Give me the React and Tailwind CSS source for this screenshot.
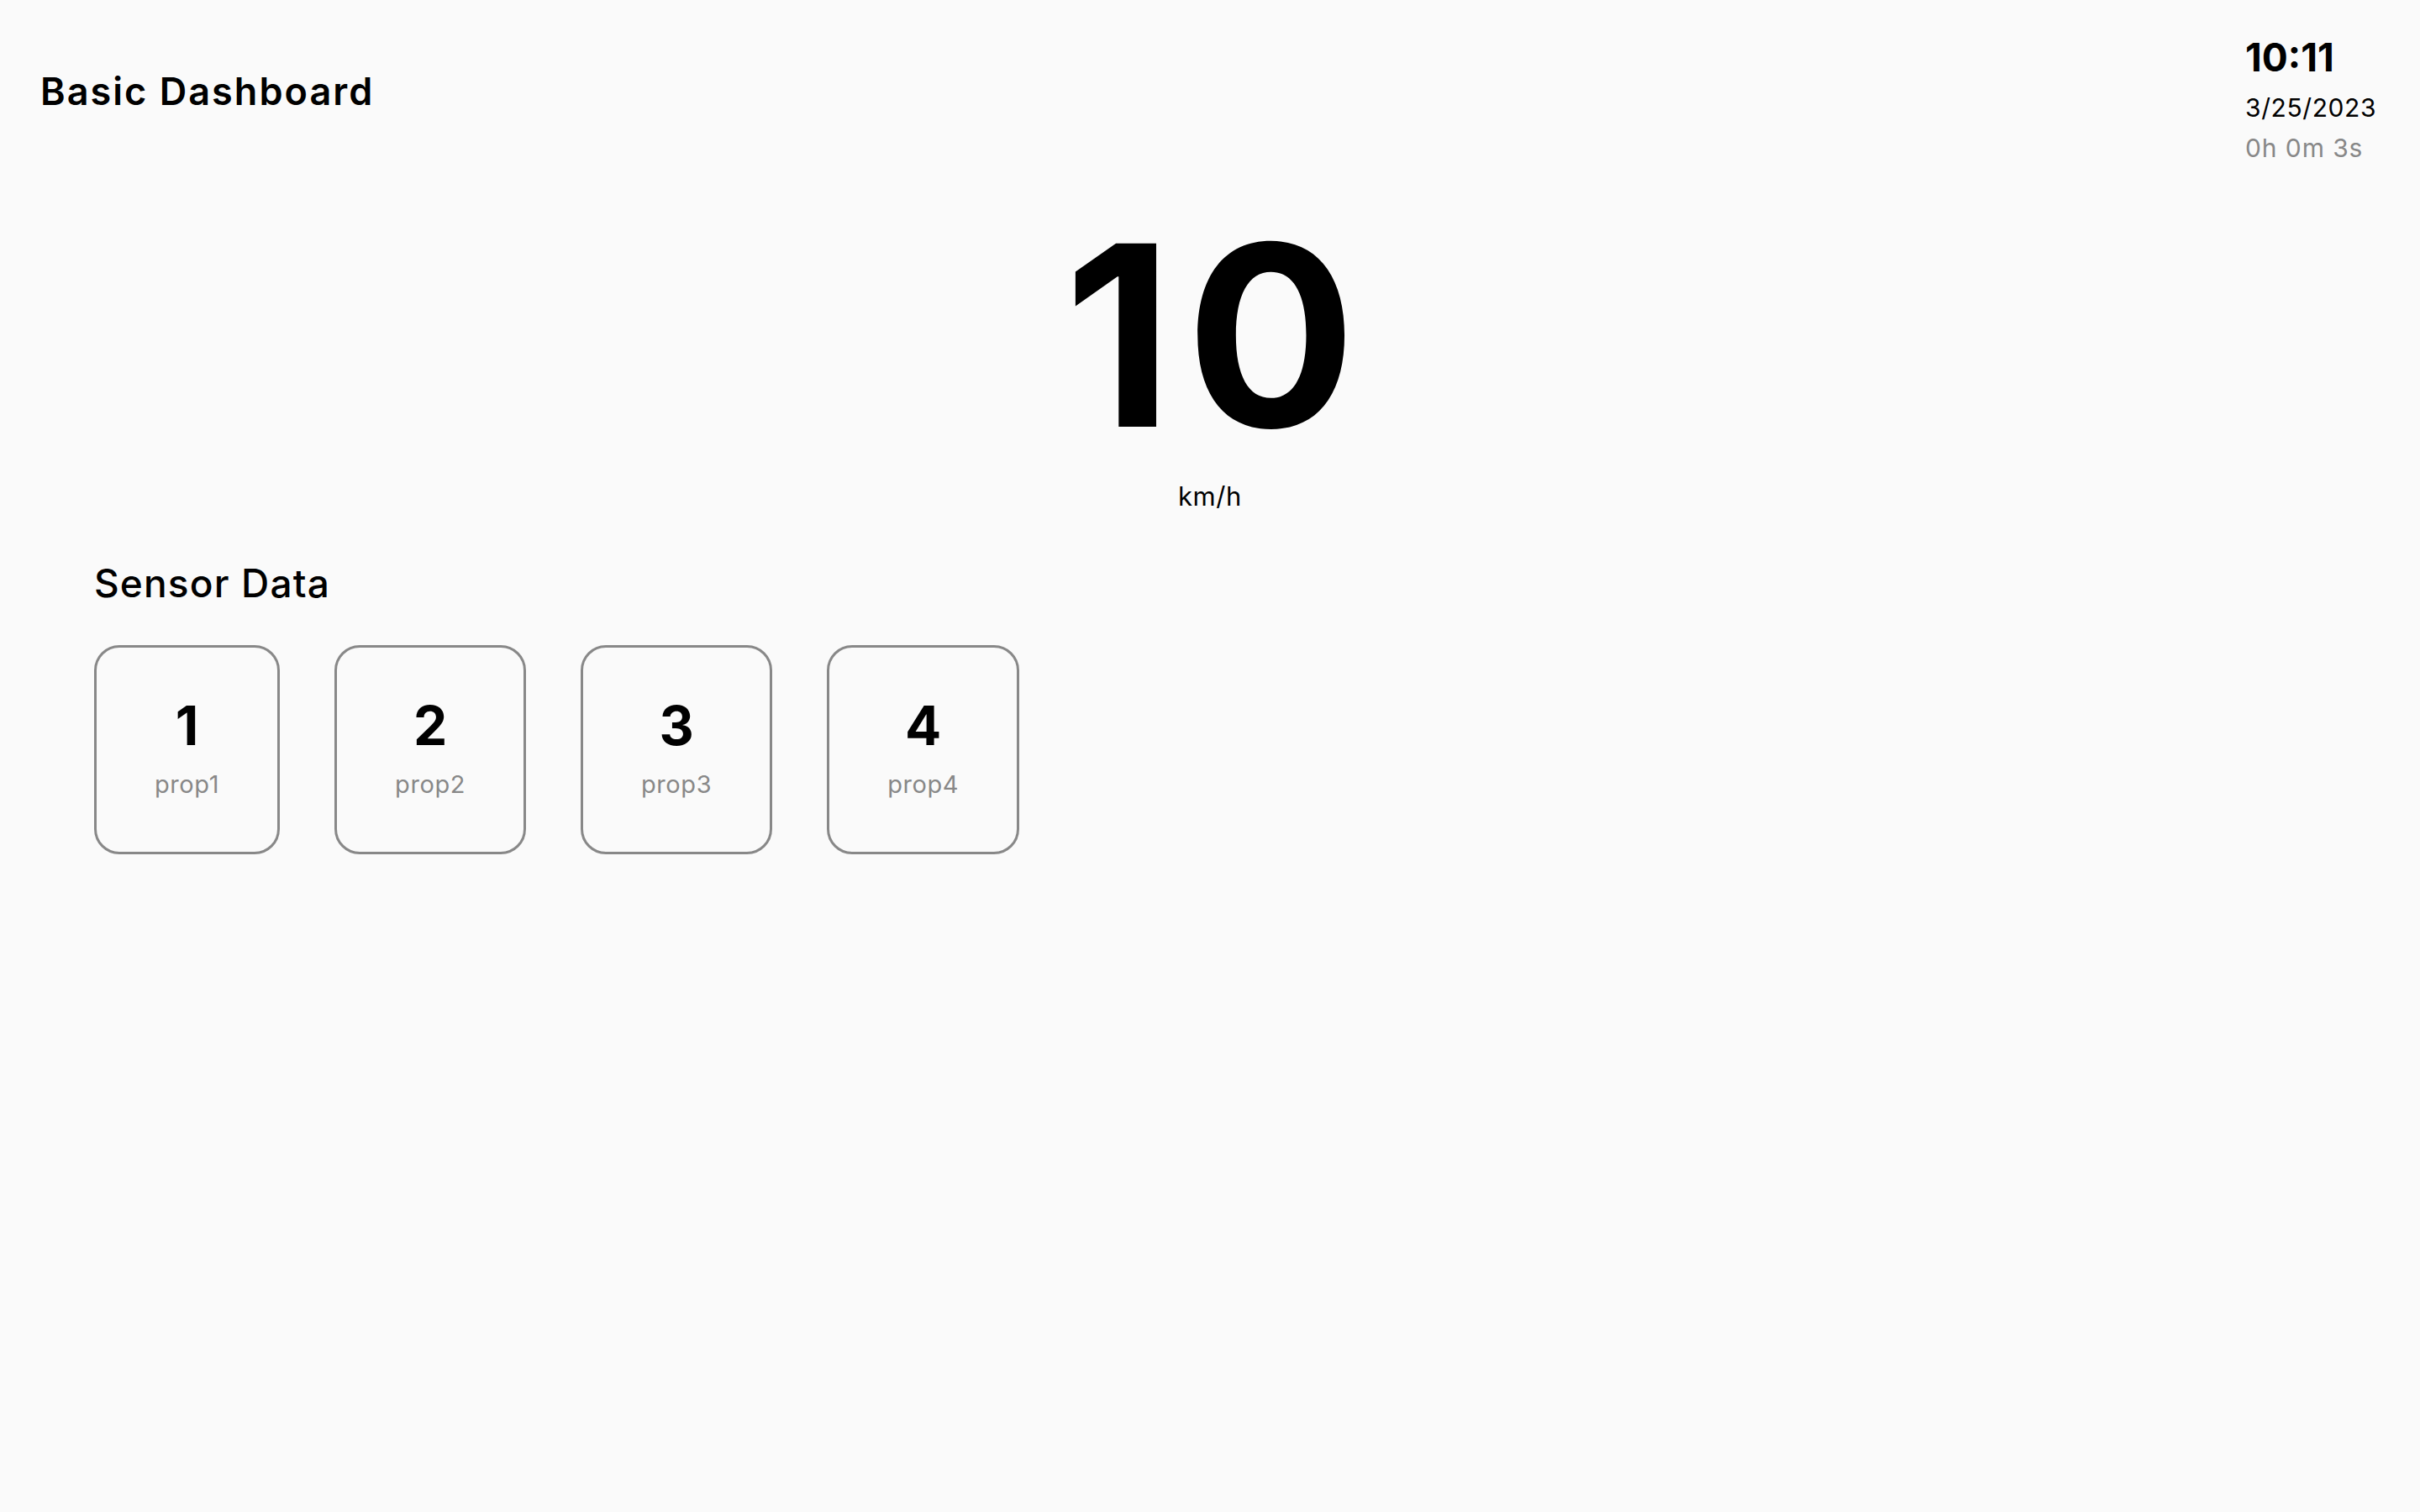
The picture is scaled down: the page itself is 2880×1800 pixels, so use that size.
import React from "react";

const sensors = [
  { value: 1, label: "prop1" },
  { value: 2, label: "prop2" },
  { value: 3, label: "prop3" },
  { value: 4, label: "prop4" },
];

function SensorCard({ value, label }) {
  return (
    <div className="flex flex-col items-center border-[3px] border-[#888888] rounded-[30px] px-[69px] pt-[61px] pb-[66px]">
      <div className="text-[64px] font-bold leading-none">{value}</div>
      <div className="mt-[23px] text-[29px] leading-none tracking-[0.02em] text-[#888888]">{label}</div>
    </div>
  );
}

export default function App() {
  return (
    <div className="min-h-screen bg-[#fafafa] text-black font-['Inter',sans-serif]">
      <header className="flex justify-between items-start">
        <h1 className="pl-[48px] pt-[86px] text-[45px] font-semibold leading-none tracking-[0.045em]">Basic Dashboard</h1>
        <div className="w-[158px] mr-[50px] pt-[45px]">
          <div className="text-[46px] font-bold leading-none">10:11</div>
          <div className="mt-[22px] text-[30px] leading-none tracking-[0.02em]">3/25/2023</div>
          <div className="mt-[18px] text-[30px] leading-none tracking-[0.03em] text-[#888888]">0h 0m 3s</div>
        </div>
      </header>

      <div className="flex flex-col items-center mt-[35px]">
        <div className="pl-[16px] text-[300px] font-bold leading-[1.15] tracking-[0.053em]">10</div>
        <div className="mt-[4px] text-[31px] leading-none tracking-[0.02em]">km/h</div>
      </div>

      <section className="pl-[112px] mt-[65px]">
        <h2 className="text-[46px] font-medium leading-none tracking-[0.025em]">Sensor Data</h2>
        <div className="mt-[51px] flex gap-[65px]">
          {sensors.map((s) => (
            <SensorCard key={s.label} value={s.value} label={s.label} />
          ))}
        </div>
      </section>
    </div>
  );
}
